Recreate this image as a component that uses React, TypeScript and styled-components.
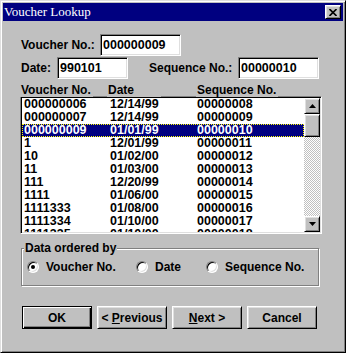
import React from "react";
import styled, { createGlobalStyle } from "styled-components";

const GlobalStyle = createGlobalStyle`
  html, body {
    margin: 0;
    padding: 0;
    background: #c0c0c0;
  }
`;

const raised = `
  border: 1px solid;
  border-color: #fff #000 #000 #fff;
  box-shadow: inset 1px 1px #dfdfdf, inset -1px -1px #808080;
`;

const sunken = `
  border: 1px solid;
  border-color: #808080 #fff #fff #808080;
  box-shadow: inset 1px 1px #000, inset -1px -1px #dfdfdf;
`;

const Window = styled.div`
  box-sizing: border-box;
  width: 346px;
  height: 353px;
  padding: 2px;
  background: #c0c0c0;
  border: 1px solid;
  border-color: #dfdfdf #000 #000 #dfdfdf;
  box-shadow: inset 1px 1px #fff, inset -1px -1px #808080;
  display: flex;
  flex-direction: column;
  font: bold 12px "Liberation Sans", Arial, sans-serif;
  color: #000;
`;

const TitleBar = styled.div`
  height: 18px;
  background: #000080;
  display: flex;
  align-items: center;
  justify-content: space-between;
  padding: 0 2px 0 1px;
`;

const Title = styled.span`
  font: normal 13px "Liberation Serif", "Times New Roman", serif;
  color: #fff;
`;

const CloseButton = styled.div`
  box-sizing: border-box;
  width: 16px;
  height: 14px;
  background: #c0c0c0;
  ${raised}
  display: flex;
  align-items: center;
  justify-content: center;
`;

const Body = styled.div`
  display: flex;
  flex-direction: column;
  padding: 13px 0 0 17px;
`;

const FormRow = styled.div<{ $top?: number }>`
  display: flex;
  align-items: center;
  padding-left: 1px;
  margin-top: ${(p) => p.$top ?? 0}px;
`;

const Label = styled.span<{ $w: number; $ml?: number }>`
  width: ${(p) => p.$w}px;
  margin-left: ${(p) => p.$ml ?? 0}px;
  white-space: nowrap;
`;

const Field = styled.div<{ $w: number }>`
  box-sizing: border-box;
  width: ${(p) => p.$w}px;
  height: 22px;
  background: #fff;
  ${sunken}
  padding: 0 2px;
  line-height: 20px;
  font-size: 12.5px;
  white-space: nowrap;
`;

const HeaderRow = styled.div`
  display: flex;
  height: 13px;
  margin-top: 5px;
  margin-bottom: -1px;
  position: relative;
  z-index: 1;
`;

const HeaderCell = styled.span<{ $w: number; $ml: number }>`
  width: ${(p) => p.$w}px;
  margin-left: ${(p) => p.$ml}px;
  padding-left: 1px;
  box-sizing: border-box;
  background: #c0c0c0;
  line-height: 13px;
  white-space: nowrap;
`;

const ListBox = styled.div`
  box-sizing: border-box;
  width: 302px;
  height: 138px;
  padding: 1px;
  background: #fff;
  ${sunken}
  display: flex;
`;

const Rows = styled.div`
  flex: 1;
  overflow: hidden;
  font-size: 12.5px;
`;

const Row = styled.div<{ $selected?: boolean }>`
  display: flex;
  height: 13px;
  line-height: 13px;
  background: ${(p) => (p.$selected ? "#000080" : "transparent")};
  color: ${(p) => (p.$selected ? "#fff" : "#000")};
  outline: ${(p) => (p.$selected ? "1px dotted #ffff00" : "none")};
  outline-offset: -1px;
`;

const Cell = styled.span<{ $w?: number; $pl?: number }>`
  width: ${(p) => (p.$w ? `${p.$w}px` : "auto")};
  flex: ${(p) => (p.$w ? "none" : "1")};
  padding-left: ${(p) => p.$pl ?? 0}px;
  box-sizing: border-box;
  white-space: nowrap;
`;

const ScrollBar = styled.div`
  width: 16px;
  display: flex;
  flex-direction: column;
`;

const ScrollButton = styled.div<{ $h?: number }>`
  box-sizing: border-box;
  width: 16px;
  height: ${(p) => p.$h ?? 16}px;
  background: #c0c0c0;
  ${raised}
  display: flex;
  align-items: center;
  justify-content: center;
`;

const Track = styled.div`
  flex: 1;
  background-image: repeating-conic-gradient(#c0c0c0 0 25%, #fff 0 50%);
  background-size: 2px 2px;
`;

const Group = styled.div`
  position: relative;
  box-sizing: border-box;
  width: 298px;
  height: 38px;
  margin: 14px 0 0 1px;
  border: 1px solid #808080;
  box-shadow: inset 1px 1px #fff, 1px 1px #fff;
  padding: 12px 0 0 5px;
  display: flex;
`;

const Legend = styled.span`
  position: absolute;
  top: -7px;
  left: 2px;
  padding: 0 1px;
  background: #c0c0c0;
  line-height: 13px;
`;

const RadioItem = styled.div<{ $w?: number }>`
  display: flex;
  align-items: center;
  gap: 7px;
  width: ${(p) => (p.$w ? `${p.$w}px` : "auto")};
  height: 12px;
  white-space: nowrap;
`;

const RadioCircle = styled.span<{ $checked?: boolean }>`
  box-sizing: border-box;
  width: 12px;
  height: 12px;
  flex: none;
  border-radius: 50%;
  background: #fff;
  border: 1px solid;
  border-color: #808080 #fff #fff #808080;
  box-shadow: inset 1px 1px #000, inset -1px -1px #dfdfdf;
  display: flex;
  align-items: center;
  justify-content: center;

  &::after {
    content: "";
    width: 4px;
    height: 4px;
    border-radius: 50%;
    background: ${(p) => (p.$checked ? "#000" : "transparent")};
  }
`;

const ButtonRow = styled.div`
  display: flex;
  gap: 5px;
  margin: 20px 0 0 2px;
`;

const Button = styled.div<{ $default?: boolean }>`
  box-sizing: border-box;
  width: 70px;
  height: 23px;
  background: #c0c0c0;
  display: flex;
  align-items: center;
  justify-content: center;
  border: 1px solid;
  border-color: ${(p) => (p.$default ? "#000" : "#fff #000 #000 #fff")};
  box-shadow: ${(p) =>
    p.$default
      ? "inset 1px 1px #fff, inset -1px -1px #000, inset -2px -2px #808080"
      : "inset 1px 1px #dfdfdf, inset -1px -1px #808080"};

  u {
    text-decoration-thickness: 1px;
    text-underline-offset: 1px;
  }
`;

const rows = [
  ["000000006", "12/14/99", "00000008"],
  ["000000007", "12/14/99", "00000009"],
  ["000000009", "01/01/99", "00000010"],
  ["1", "12/01/99", "00000011"],
  ["10", "01/02/00", "00000012"],
  ["11", "01/03/00", "00000013"],
  ["111", "12/20/99", "00000014"],
  ["1111", "01/06/00", "00000015"],
  ["1111333", "01/08/00", "00000016"],
  ["1111334", "01/10/00", "00000017"],
  ["1111335", "01/10/00", "00000018"],
];

const Arrow = ({ up }: { up?: boolean }) => (
  <svg width="7" height="4" viewBox="0 0 7 4">
    <path d={up ? "M3.5 0 L7 4 L0 4 Z" : "M0 0 L7 0 L3.5 4 Z"} fill="#000" />
  </svg>
);

export default function App() {
  return (
    <>
      <GlobalStyle />
      <Window>
        <TitleBar>
          <Title>Voucher Lookup</Title>
          <CloseButton>
            <svg width="8" height="7" viewBox="0 0 8 7">
              <path d="M0.5 0 L7.5 7 M7.5 0 L0.5 7" stroke="#000" strokeWidth="1.6" />
            </svg>
          </CloseButton>
        </TitleBar>
        <Body>
          <FormRow>
            <Label $w={79}>Voucher No.:</Label>
            <Field $w={81}>000000009</Field>
          </FormRow>
          <FormRow $top={1}>
            <Label $w={36}>Date:</Label>
            <Field $w={71}>990101</Field>
            <Label $w={89} $ml={21}>Sequence No.:</Label>
            <Field $w={81}>00000010</Field>
          </FormRow>
          <HeaderRow>
            <HeaderCell $w={73} $ml={0}>Voucher No.</HeaderCell>
            <HeaderCell $w={54} $ml={14}>Date</HeaderCell>
            <HeaderCell $w={82} $ml={35}>Sequence No.</HeaderCell>
          </HeaderRow>
          <ListBox>
            <Rows>
              {rows.map((r, i) => (
                <Row key={i} $selected={i === 2}>
                  <Cell $w={88} $pl={2}>{r[0]}</Cell>
                  <Cell $w={87}>{r[1]}</Cell>
                  <Cell>{r[2]}</Cell>
                </Row>
              ))}
            </Rows>
            <ScrollBar>
              <ScrollButton>
                <Arrow up />
              </ScrollButton>
              <ScrollButton $h={23} />
              <Track />
              <ScrollButton>
                <Arrow />
              </ScrollButton>
            </ScrollBar>
          </ListBox>
          <Group>
            <Legend>Data ordered by</Legend>
            <RadioItem $w={109}>
              <RadioCircle $checked />
              Voucher No.
            </RadioItem>
            <RadioItem $w={70}>
              <RadioCircle />
              Date
            </RadioItem>
            <RadioItem>
              <RadioCircle />
              Sequence No.
            </RadioItem>
          </Group>
          <ButtonRow>
            <Button $default>OK</Button>
            <Button>
              &lt;&nbsp;<u>P</u>revious
            </Button>
            <Button>
              <u>N</u>ext&nbsp;&gt;
            </Button>
            <Button>Cancel</Button>
          </ButtonRow>
        </Body>
      </Window>
    </>
  );
}
